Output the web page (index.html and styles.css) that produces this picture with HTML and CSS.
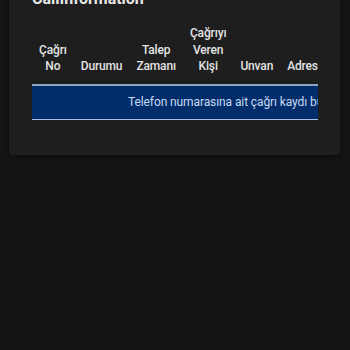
FILE: index.html
```html
<!DOCTYPE html>
<html lang="tr">
<head>
<meta charset="utf-8">
<link rel="stylesheet" href="styles.css">
</head>
<body>
<div class="card">
  <h2 class="title">CallInformation</h2>
  <div class="table-wrap">
    <table class="calls">
      <thead>
        <tr>
          <th class="c-no">Çağrı<br>No</th>
          <th class="c-status">Durumu</th>
          <th class="c-time">Talep<br>Zamanı</th>
          <th class="c-person">Çağrıyı<br>Veren<br>Kişi</th>
          <th class="c-title">Unvan</th>
          <th class="c-addr">Adres</th>
          <th class="c-more">Telefon</th>
        </tr>
      </thead>
      <tbody>
        <tr class="empty">
          <td colspan="7">Telefon numarasına ait çağrı kaydı bulunamadı.</td>
        </tr>
      </tbody>
    </table>
  </div>
</div>
</body>
</html>
```

FILE: styles.css
```css
html, body {
  margin: 0;
  padding: 0;
  background: #141414;
  height: 100%;
}
body {
  font-family: Roboto, "Noto Sans", "Liberation Sans", sans-serif;
  color: #e6e6e6;
}
.card {
  margin: -20px 10px 0 9px;
  width: 331px;
  box-sizing: border-box;
  background: #1e1e1e;
  border-radius: 4px;
  padding: 8px 22px 35px 23px;
  box-shadow: 0 2px 6px rgba(0,0,0,0.35);
}
.title {
  margin: 0;
  font-size: 16px;
  font-weight: 700;
  line-height: 22px;
  color: #e8e8e8;
}
.table-wrap {
  width: 286px;
  overflow: hidden;
  margin-top: 15px;
}
.calls {
  border-collapse: collapse;
  white-space: nowrap;
}
.calls th {
  font-size: 12px;
  font-weight: 500;
  letter-spacing: -0.15px;
  line-height: 16.5px;
  color: #e4e4e4;
  text-align: center;
  vertical-align: bottom;
  padding: 0 7px 9px;
  border-bottom: 2px solid #8ea6c6;
}
.empty td {
  background: #012d6b;
  color: #c9d9f2;
  font-size: 12px;
  letter-spacing: -0.1px;
  line-height: 17px;
  height: 33px;
  padding: 0 0 0 96px;
  text-align: left;
  border-bottom: 1.5px solid #a9c1e2;
}
```
